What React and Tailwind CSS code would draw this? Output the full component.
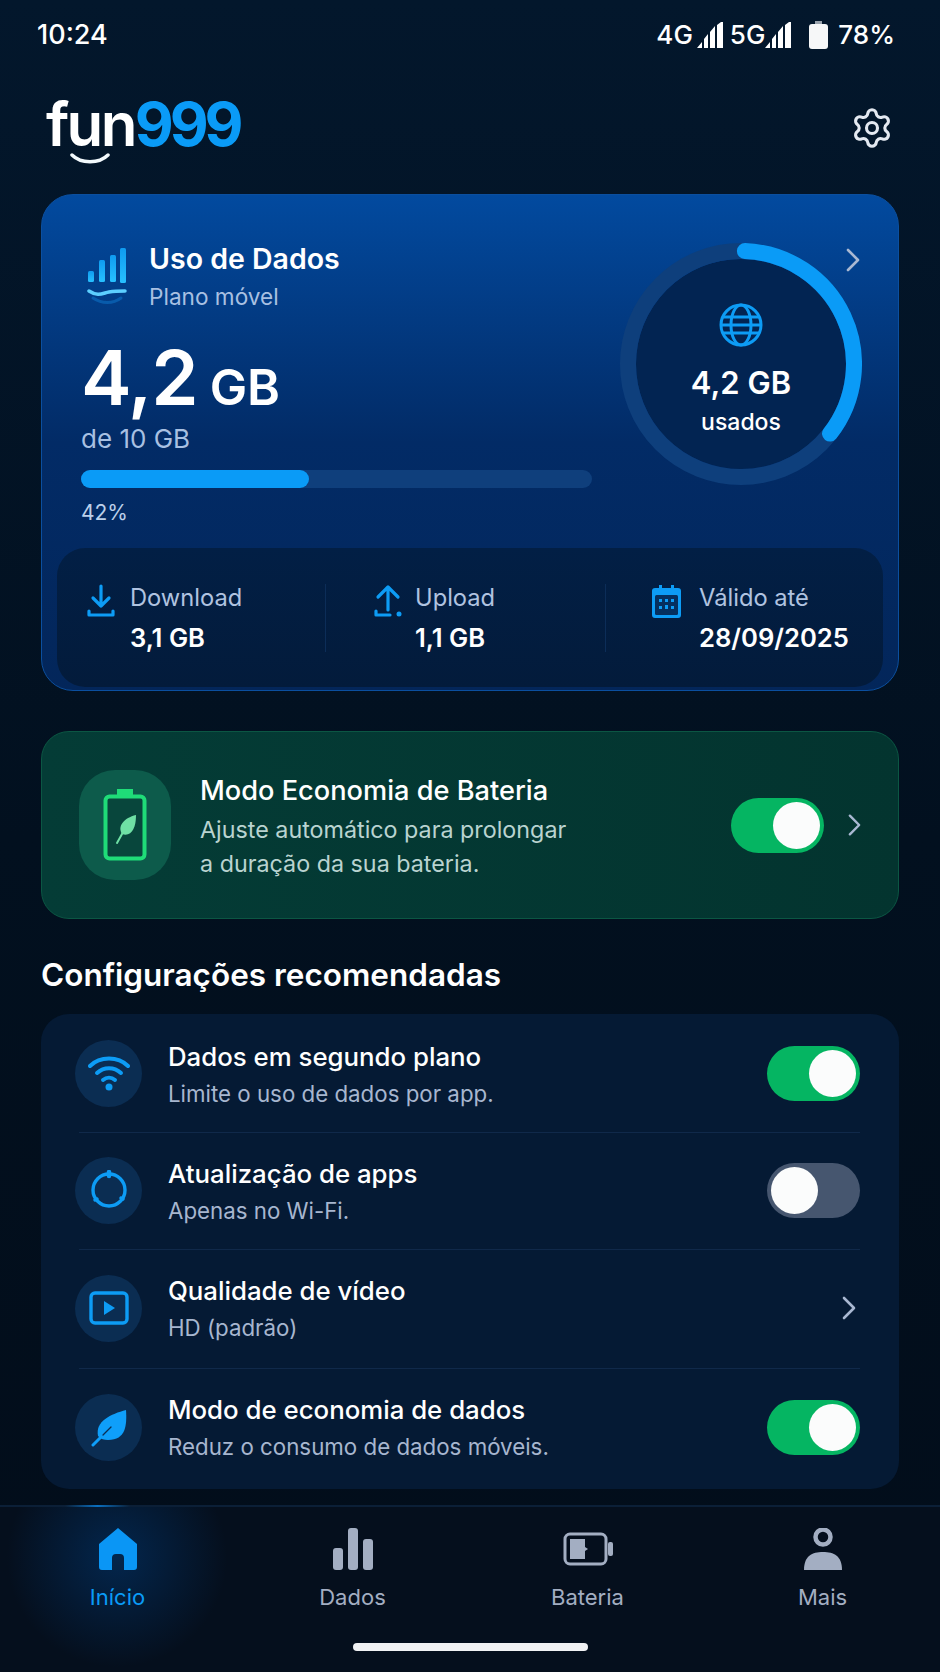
import React from "react";
import { Settings } from "lucide-react";

const Chevron = ({ className }) => (
  <svg viewBox="0 0 14 24" className={className} fill="none" stroke="#a9b8d2" strokeWidth="2.6" strokeLinecap="round" strokeLinejoin="round">
    <path d="M2 2l10 10L2 22" />
  </svg>
);

const Signal = () => (
  <svg viewBox="0 0 27 26" className="w-[27px] h-[26px]" fill="#ffffff">
    <path d="M0 26l5-6v6zM7 26v-9l4-5v14zM13 26V10l5-6v22zM20 26V3l4-3h2v26z" />
  </svg>
);

const Toggle = ({ on }) => (
  <div className={on ? "w-[93px] h-[55px] rounded-full p-[4px] flex justify-end shrink-0 bg-[#05b562]" : "w-[93px] h-[55px] rounded-full p-[4px] flex justify-start shrink-0 bg-[#46566f]"}>
    <div className="w-[47px] h-[47px] rounded-full bg-[#fbfcfc]" />
  </div>
);

const Wifi = () => (
  <svg viewBox="0 0 42 36" className="w-[42px] h-[36px]" fill="none" stroke="#0d9cf5" strokeWidth="4" strokeLinecap="round">
    <path d="M2 11C12 1 30 1 40 11" />
    <path d="M9 18c7-6.500 17-6.500 24 0" />
    <path d="M15 25c3.500-3 8.500-3 12 0" />
    <circle cx="21" cy="32" r="3.500" fill="#0d9cf5" stroke="none" />
  </svg>
);
const Refresh = () => (
  <svg viewBox="0 0 40 40" className="w-[40px] h-[40px]" fill="none" stroke="#0d9cf5" strokeWidth="3.400">
    <circle cx="20" cy="20" r="16" />
    <path d="M20 2v4" strokeWidth="4.500" strokeLinecap="round" />
    <path d="M6 30l2-1M34 29l-2-1" strokeWidth="3.500" strokeLinecap="round" />
  </svg>
);
const Video = () => (
  <svg viewBox="0 0 40 34" className="w-[40px] h-[34px]" fill="none" stroke="#0d9cf5" strokeWidth="3.400">
    <rect x="2" y="2" width="36" height="30" rx="4" />
    <path d="M15 10l11 7-11 7z" fill="#0d9cf5" stroke="none" />
  </svg>
);
const Leaf = () => (
  <svg viewBox="0 0 36 38" className="w-[36px] h-[38px]">
    <path d="M35 1C36 16 35 31 17 31c-4 0-7-1-10-4C4 12 20 5 35 1z" fill="#0f9ffa" />
    <path d="M2 36L14 24" stroke="#0f9ffa" strokeWidth="3" strokeLinecap="round" fill="none" />
    <path d="M12 26L20 18" stroke="#0b2d52" strokeWidth="1.200" strokeLinecap="round" fill="none" />
  </svg>
);

const rows = [
  { t: "Dados em segundo plano", s: "Limite o uso de dados por app.", icon: <Wifi />, h: "h-[118px]", tx: "pt-[4px]", right: <Toggle on /> },
  { t: "Atualização de apps", s: "Apenas no Wi-Fi.", icon: <Refresh />, h: "h-[116px] pb-[2px]", tx: "pt-[4px]", right: <Toggle on={false} /> },
  { t: "Qualidade de vídeo", s: "HD (padrão)", icon: <Video />, h: "h-[118px] pb-[2px]", tx: "pt-[2px]", right: <Chevron className="w-[14px] h-[24px] mr-[4px]" /> },
  { t: "Modo de economia de dados", s: "Reduz o consumo de dados móveis.", icon: <Leaf />, h: "h-[120px] pb-[3px]", tx: "pt-0", right: <Toggle on /> },
];

const stats = [
  {
    label: "Download", value: "3,1 GB", w: "w-[269px] pl-[30px]", gap: "gap-[15px]",
    icon: (
      <svg viewBox="0 0 28 34" className="w-[28px] h-[34px]" fill="none" stroke="#0d9cf5" strokeWidth="3.200" strokeLinecap="round" strokeLinejoin="round">
        <path d="M14 2v20M6 14l8 8 8-8" />
        <path d="M2 27v4h24v-4" />
      </svg>
    ),
  },
  {
    label: "Upload", value: "1,1 GB", w: "w-[280px] pl-[48px]", gap: "gap-[13px]",
    icon: (
      <svg viewBox="0 0 28 34" className="w-[28px] h-[34px]" fill="none" stroke="#0d9cf5" strokeWidth="3.200" strokeLinecap="round" strokeLinejoin="round">
        <path d="M14 26V3M4 13L14 3l10 10" />
        <path d="M2 27v4h14" />
        <circle cx="25" cy="30" r="2.500" fill="#0d9cf5" stroke="none" />
      </svg>
    ),
  },
  {
    label: "Válido até", value: "28/09/2025", w: "flex-1 pl-[45px]", gap: "gap-[17px]",
    icon: (
      <svg viewBox="0 0 31 34" className="w-[31px] h-[34px]">
        <path d="M4 4h4V1h3v3h9V1h3v3h4a3 3 0 0 1 3 3v24a3 3 0 0 1-3 3H4a3 3 0 0 1-3-3V7a3 3 0 0 1 3-3z" fill="#0d9cf5" />
        <rect x="4" y="11" width="23" height="20" rx="1.500" fill="#05305f" />
        <path d="M8 15h3v3H8zM14 15h3v3h-3zM20 15h3v3h-3zM8 22h3v3H8zM14 21h3v4h-3zM20 22h3v3h-3z" fill="#0d9cf5" />
      </svg>
    ),
  },
];

const navItems = [
  {
    label: "Início", active: true,
    icon: (
      <svg viewBox="0 0 38 42" className="w-[38px] h-[42px]">
        <path d="M19 0L38 16v23a3 3 0 0 1-3 3H25V30a4 4 0 0 0-4-4h-4a4 4 0 0 0-4 4v12H3a3 3 0 0 1-3-3V16z" fill="#0a96f5" />
      </svg>
    ),
  },
  {
    label: "Dados",
    icon: (
      <svg viewBox="0 0 40 42" className="w-[40px] h-[42px]" fill="#a3aec2">
        <rect x="0" y="20" width="10" height="22" rx="3" />
        <rect x="15" y="0" width="10" height="42" rx="3" />
        <rect x="30" y="11" width="10" height="31" rx="3" />
      </svg>
    ),
  },
  {
    label: "Bateria",
    icon: (
      <svg viewBox="0 0 50 34" className="w-[50px] h-[34px]">
        <rect x="2" y="2" width="41" height="30" rx="5" fill="none" stroke="#a3aec2" strokeWidth="3" />
        <rect x="45" y="10" width="5" height="14" rx="2" fill="#a3aec2" />
        <path d="M7 7h15v8l3 2-3 2v8H7z" fill="#a3aec2" />
      </svg>
    ),
  },
  {
    label: "Mais",
    icon: (
      <svg viewBox="0 0 38 42" className="w-[38px] h-[42px]">
        <circle cx="19" cy="9" r="7.500" fill="none" stroke="#a3aec2" strokeWidth="4.500" />
        <path d="M0 42c0-14 8-18 19-18s19 4 19 18z" fill="#a3aec2" />
      </svg>
    ),
  },
];

export default function App() {
  return (
    <div className="w-[940px] h-[1672px] overflow-hidden flex flex-col text-white bg-gradient-to-b from-[#03172c] via-[#02101f] to-[#020d1a] [font-family:Inter,sans-serif]">
      {/* status bar */}
      <div className="h-[70px] flex items-center justify-between pl-[37px] pr-[45px] text-[26px] leading-[32px] font-medium shrink-0">
        <span className="text-[27px]">10:24</span>
        <div className="flex items-center">
          <span>4G</span>
          <span className="ml-[4px]"><Signal /></span>
          <span className="ml-[6px]">5G</span>
          <span className="ml-0"><Signal /></span>
          <svg viewBox="0 0 19 28" className="w-[19px] h-[28px] ml-[17px]">
            <path d="M6 0h7v3H6z" fill="#9aa3ad" />
            <rect x="0" y="3" width="19" height="25" rx="3" fill="#f6f7f8" />
          </svg>
          <span className="ml-[10px]">78%</span>
        </div>
      </div>

      {/* logo row */}
      <div className="h-[124px] shrink-0 flex items-start justify-between pl-[46px] pr-[46px] pt-[24px]">
        <div className="flex flex-col items-start">
          <div className="text-[60px] leading-[60px] flex">
            <span className="text-white font-semibold tracking-[-2.700px]">fun</span>
            <span className="text-[#0a9bf7] font-bold tracking-[-4px]">999</span>
          </div>
          <svg viewBox="0 0 40 11" className="w-[40px] h-[11px] ml-[24px] -mt-[1px]" fill="none" strokeWidth="3.500" strokeLinecap="round">
            <path d="M2 2c9 9 27 9 36 0" stroke="#f3f9fd" />
          </svg>
        </div>
        <Settings size={44} strokeWidth={1.7} className="text-[#e4e9f1] mt-[12px]" />
      </div>

      <div className="flex-1 flex flex-col px-[41px]">
        {/* usage card */}
        <div className="relative h-[497px] rounded-[32px] border border-[#0b4f9f] bg-gradient-to-b from-[#024a9f] via-[#022b66] to-[#03265a] flex flex-col shrink-0">
          <Chevron className="absolute right-[38px] top-[53px] w-[14px] h-[24px]" />
          <div className="flex justify-between pl-[39px] pr-[36px] pt-[46px]">
            <div className="w-[511px] flex flex-col">
              <div className="flex items-start">
                <svg viewBox="0 0 40 58" className="w-[40px] h-[58px] ml-[6px] mt-[7px] shrink-0">
                  <defs>
                    <linearGradient id="bars" x1="0" y1="0" x2="0" y2="1">
                      <stop offset="0" stopColor="#0f9bf0" />
                      <stop offset="1" stopColor="#27c0ff" />
                    </linearGradient>
                  </defs>
                  <rect x="1" y="23" width="6" height="11" rx="1.500" fill="url(#bars)" />
                  <rect x="12" y="12" width="6" height="22" rx="1.500" fill="url(#bars)" />
                  <rect x="23" y="7" width="6" height="27" rx="1.500" fill="url(#bars)" />
                  <rect x="33" y="0" width="6" height="35" rx="1.500" fill="url(#bars)" />
                  <path d="M2 43c9 6 14 2 20 1s11-1 16-1" fill="none" stroke="#5ccfff" strokeWidth="3.500" strokeLinecap="round" />
                  <path d="M6 50c9 6 20 6 28 0" fill="none" stroke="#0e6fc4" strokeWidth="3" strokeLinecap="round" opacity="0.6" />
                </svg>
                <div className="ml-[22px] flex flex-col gap-[5px]">
                  <div className="text-[28.500px] leading-[36px] font-semibold">Uso de Dados</div>
                  <div className="text-[22.600px] leading-[30px] text-[#a8c0e2]">Plano móvel</div>
                </div>
              </div>
              <div className="mt-[25px] h-[80px] flex items-baseline">
                <span className="text-[76px] leading-[80px] font-semibold tracking-[-1px]">4,2</span>
                <span className="text-[50px] leading-[80px] font-semibold ml-[12px]">GB</span>
              </div>
              <div className="mt-[6px] text-[26px] leading-[32px] text-[#a8c0e2]">de 10 GB</div>
              <div className="mt-[15px] h-[18px] rounded-full bg-[#0f3f7c]">
                <div className="h-full w-[228px] rounded-full bg-[#0a9bf7]" />
              </div>
              <div className="mt-[11px] text-[21px] leading-[28px] text-[#bcd0ea]">42%</div>
            </div>
            <div className="w-[242px] h-[242px] mt-[2px] grid place-items-center shrink-0">
              <svg viewBox="0 0 242 242" className="w-[242px] h-[242px] [grid-area:1/1]" fill="none">
                <circle cx="121" cy="121" r="105" fill="#022452" />
                <circle cx="121" cy="121" r="113" stroke="#0e3f7c" strokeWidth="16" />
                <path d="M124.900 8.070A113 113 0 0 1 210 190.600" stroke="#0a9bf7" strokeWidth="16" strokeLinecap="round" />
              </svg>
              <div className="[grid-area:1/1] flex flex-col items-center pt-[12px]">
                <svg viewBox="0 0 44 44" className="w-[44px] h-[44px] mb-[18px]" fill="none" stroke="#0d9cf5" strokeWidth="3">
                  <circle cx="22" cy="22" r="20" />
                  <ellipse cx="22" cy="22" rx="10" ry="20" />
                  <path d="M4 14h36M4 30h36M2 22h40" />
                </svg>
                <div className="text-[31px] leading-[36px] font-semibold">4,2 GB</div>
                <div className="text-[23px] leading-[30px] font-medium mt-[6px]">usados</div>
              </div>
            </div>
          </div>
          <div className="mt-[21px] mx-[15px] h-[139px] rounded-[28px] bg-gradient-to-b from-[#021f45] to-[#031b3b] flex items-center">
            {stats.map((s, i) => (
              <div key={s.label} className={"h-[68px] flex items-start " + s.w + " " + s.gap + (i < 2 ? " border-r border-[#0c2d58]" : "")}>
                <div className="shrink-0">{s.icon}</div>
                <div className="flex flex-col">
                  <div className="text-[23.700px] leading-[28px] text-[#b0c3e0]">{s.label}</div>
                  <div className="text-[25.600px] leading-[30px] font-semibold mt-[11px]">{s.value}</div>
                </div>
              </div>
            ))}
          </div>
        </div>

        {/* battery card */}
        <div className="mt-[40px] h-[188px] rounded-[28px] border border-[#0b5643] bg-gradient-to-r from-[#043c36] to-[#03342f] flex items-center pl-[37px] pr-[37px] shrink-0">
          <div className="w-[92px] h-[110px] rounded-[36px] bg-[#0d5b4b] flex items-center justify-center shrink-0">
            <svg viewBox="0 0 44 72" className="w-[44px] h-[72px]" fill="none">
              <path d="M14 0h16v6H14z" fill="#1fdc78" />
              <rect x="2.500" y="7.500" width="39" height="62" rx="4" stroke="#1fdc78" strokeWidth="4" fill="#08463c" />
              <path d="M33 26C33 40 28 48 19 45c-5-8 2-16 14-19z" fill="#6fe0a5" />
              <path d="M14 54L24 36" stroke="#6fe0a5" strokeWidth="2" strokeLinecap="round" />
            </svg>
          </div>
          <div className="ml-[29px] flex-1 flex flex-col pt-[6px]">
            <div className="text-[27.200px] leading-[32px] font-medium">Modo Economia de Bateria</div>
            <div className="mt-[6px] text-[23.300px] leading-[34px] text-[#b9d3d0]">
              Ajuste automático para prolongar<br />a duração da sua bateria.
            </div>
          </div>
          <Toggle on />
          <Chevron className="w-[13px] h-[24px] ml-[24px]" />
        </div>

        <h2 className="mt-[38px] text-[31.500px] leading-[36px] font-semibold">Configurações recomendadas</h2>

        {/* list */}
        <div className="mt-[21px] rounded-[28px] bg-[#051a34] flex flex-col shrink-0">
          {rows.map((r, i) => (
            <React.Fragment key={r.t}>
              {i > 0 && <div className="h-px ml-[38px] mr-[39px] bg-[#10294a]" />}
              <div className={"flex items-center pl-[34px] pr-[39px] " + r.h}>
                <div className="w-[67px] h-[67px] rounded-full bg-[#0b2d52] flex items-center justify-center shrink-0">{r.icon}</div>
                <div className={"ml-[26px] flex-1 flex flex-col " + r.tx}>
                  <div className="text-[25.800px] leading-[32px] font-medium">{r.t}</div>
                  <div className="mt-[6px] text-[22.300px] leading-[30px] text-[#a7b6cf]">{r.s}</div>
                </div>
                {r.right}
              </div>
            </React.Fragment>
          ))}
        </div>
      </div>

      {/* nav */}
      <div className="h-[167px] shrink-0 border-t-2 border-[#0b1f37] bg-[#050f1d] relative flex flex-col">
        <div className="absolute inset-0 bg-[radial-gradient(circle_110px_at_117px_50px,#03264d_0%,transparent_100%)]" />
        <div className="absolute left-[65px] -top-[2px] w-[65px] h-[2px] bg-gradient-to-r from-transparent via-[#0a6fc0] to-transparent" />
        <div className="relative grid grid-cols-4 pt-[20px]">
          {navItems.map((n) => (
            <div key={n.label} className="flex flex-col items-center">
              <div className="h-[44px] flex items-center justify-center">{n.icon}</div>
              <div className={n.active ? "mt-[12px] text-[22px] leading-[28px] text-[#0a9bf7]" : "mt-[12px] text-[22px] leading-[28px] text-[#a3aec2]"}>{n.label}</div>
            </div>
          ))}
        </div>
        <div className="relative mt-auto mb-[21px] mx-auto w-[235px] h-[8px] rounded-full bg-[#f1f2f4]" />
      </div>
    </div>
  );
}
